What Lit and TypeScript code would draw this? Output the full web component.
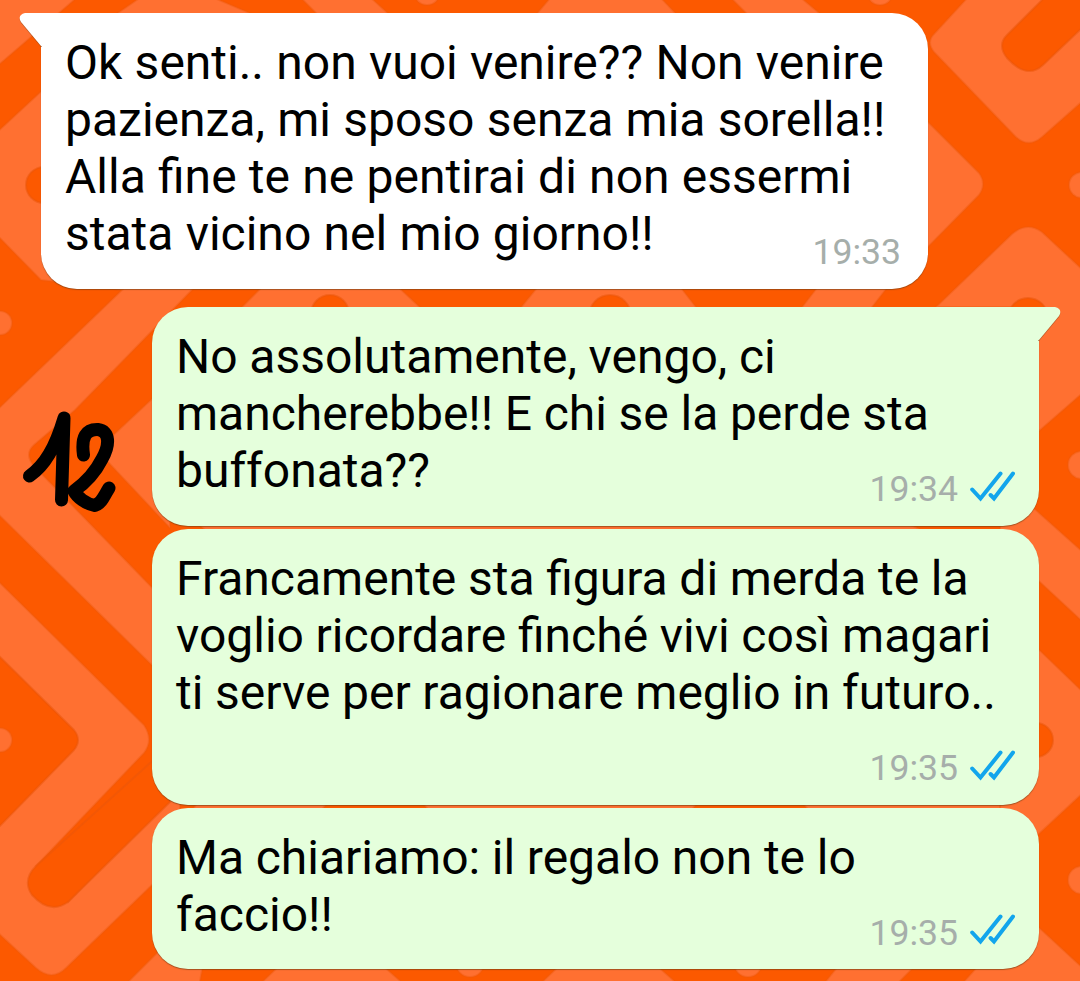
import { LitElement, html, css, svg, nothing } from 'lit';
import { customElement, property } from 'lit/decorators.js';
import { classMap } from 'lit/directives/class-map.js';

interface Message {
  lines: string[];
  time: string;
  sent: boolean;
  tail: boolean;
  tall?: boolean;
}

const MESSAGES: Message[] = [
  {
    lines: [
      'Ok senti.. non vuoi venire?? Non venire',
      'pazienza, mi sposo senza mia sorella!!',
      'Alla fine te ne pentirai di non essermi',
      'stata vicino nel mio giorno!!',
    ],
    time: '19:33',
    sent: false,
    tail: true,
  },
  {
    lines: ['No assolutamente, vengo, ci', 'mancherebbe!! E chi se la perde sta', 'buffonata??'],
    time: '19:34',
    sent: true,
    tail: true,
  },
  {
    lines: [
      'Francamente sta figura di merda te la',
      'voglio ricordare finché vivi così magari',
      'ti serve per ragionare meglio in futuro..',
    ],
    time: '19:35',
    sent: true,
    tail: false,
    tall: true,
  },
  {
    lines: ['Ma chiariamo: il regalo non te lo', 'faccio!!'],
    time: '19:35',
    sent: true,
    tail: false,
  },
];

// light ribbons of the wallpaper
const RIBBONS = [
  // left side
  'M-5 -5H80L-5 68Z',
  'M-5 134L141 -1H212L300 80V120L193 289L75 410L34 445Q24 454 34 466L170 606V683L-5 511V412L122 290L41 280L-5 233Z',
  'M170 382L108 440Q98 450 108 462L170 528Z',
  'M-5 578L144 725Q154 740 144 753L36 866L68 902L152 815L180 788V850L152 885L66 968Q52 982 36 968L-5 930Z',
  'M124 986L170 940H208L199 986Z',
  // strips between the bubbles
  'M265 284H395L424 311H238Z',
  'M540 284H678L699 311H518Z',
  'M820 284H890L869 311H799Z',
  'M300 -3H370L392 17H320Z',
  'M212 -3L259 17H112L141 -3Z',
  'M551 -3H660L679 17H534Z',
  'M730 -3H800L824 17H750Z',
  'M195 522H905L930 534H210Z',
  'M200 800H330L320 812H190Z',
  'M420 800H700L690 812H430Z',
  'M800 800H1010V812H810Z',
  'M280 965H382L406 986H258Z',
  'M560 965H656L680 986H538Z',
  'M839 965H916L895 986H822Z',
  'M979 965L1000 910H1020L1085 970V986H960Z',
  // right side
  'M970 -5L934 34Q926 42 934 52L1013 134Q1027 150 1042 137L1085 99V-5Z',
  'M920 114L979 173Q987 184 979 195L920 255Z',
  'M936 307L1012 234Q1027 221 1042 232L1085 272V391L1039 431H1020V307Z',
  'M1000 478L1085 554V624L1000 545Z',
  'M1000 612L1085 694V791L1000 870Z',
];

const GROOVES = [
  'M-5 652L74 730Q82 740 74 750L-5 831Z',
  'M170 745L36 866Q22 880 32 895Q50 915 68 902L170 802Z',
  'M1046 -4L1007 35Q997 45 1007 58Q1027 80 1043 65L1085 25V-4Z',
];

const LIGHT_DOTS = [
  [0, 323, 12],
  [0, 740, 12],
  [427, -8, 13],
  [880, -8, 13],
  [470, 963, 14],
  [748, 963, 14],
  [1082, 185, 13],
  [1082, 465, 14],
  [1082, 880, 14],
];

const DARK_DOTS = [
  [44, 185, 18],
  [330, 314, 19],
  [610, 316, 21],
  [1028, 318, 20],
  [1036, 740, 17],
];

@customElement('chat-wallpaper')
export class ChatWallpaper extends LitElement {
  static styles = css`
    :host {
      display: block;
    }

    svg {
      display: block;
      width: 100%;
      height: 100%;
    }

    .ribbon {
      fill: #ff7031;
      stroke: #ee5b0d;
      stroke-width: 2;
      stroke-opacity: 0.4;
    }

    .groove {
      fill: #fc5900;
      stroke: #e9560a;
      stroke-width: 2;
      stroke-opacity: 0.5;
    }
  `;

  render() {
    return html`
      <svg viewBox="0 0 1080 981" preserveAspectRatio="none" aria-hidden="true">
        ${RIBBONS.map((d) => svg`<path class="ribbon" d=${d} />`)}
        ${GROOVES.map((d) => svg`<path class="groove" d=${d} />`)}
        ${LIGHT_DOTS.map(([x, y, r]) => svg`<circle class="ribbon" cx=${x} cy=${y} r=${r} />`)}
        ${DARK_DOTS.map(([x, y, r]) => svg`<circle class="groove" cx=${x} cy=${y} r=${r} />`)}
      </svg>
    `;
  }
}

@customElement('chat-bubble')
export class ChatBubble extends LitElement {
  static styles = css`
    :host {
      display: block;
    }

    .bubble {
      position: relative;
      display: grid;
      box-sizing: border-box;
      width: 887px;
      padding: 21px 24px 27px;
      border-radius: 36px;
      background: #fff;
      word-spacing: 0.35px;
      box-shadow: 0 1px 1px rgba(110, 60, 20, 0.6);
    }

    .sent {
      margin-left: auto;
      background: #e5ffdc;
      word-spacing: -0.25px;
    }

    .received.tail {
      border-top-left-radius: 0;
    }

    .sent.tail {
      border-top-right-radius: 0;
    }

    .tall {
      padding-bottom: 84.25px;
    }

    :host(:last-of-type) .bubble {
      padding-bottom: 26.25px;
    }

    .text,
    .meta {
      grid-area: 1 / 1;
    }

    .text {
      margin: 0;
      font-size: 48px;
      line-height: 57px;
      white-space: nowrap;
      color: #000;
    }

    .line {
      display: block;
    }

    .meta {
      display: flex;
      align-items: center;
      align-self: end;
      justify-self: end;
      gap: 11px;
      margin-bottom: -11px;
      margin-right: 3px;
      font-size: 35.6px;
      line-height: 42px;
      color: #a6aeaa;
    }

    .tall .meta {
      margin-bottom: -68.25px;
    }

    .sent .meta {
      margin-right: 0;
    }

    .ticks {
      display: block;
      width: 46px;
      height: 32px;
      margin-top: -5px;
      fill: none;
      stroke: #12a5ec;
      stroke-width: 4;
      stroke-linecap: round;
    }

    .corner {
      position: absolute;
      top: 0;
      left: -21px;
      width: 22px;
      height: 34px;
      fill: #fff;
      overflow: visible;
      filter: drop-shadow(0 1px 0.5px rgba(110, 60, 20, 0.5));
      clip-path: inset(0 0 -3px -3px);
    }

    .sent .corner {
      left: auto;
      right: -21px;
      fill: #e5ffdc;
      transform: scaleX(-1);
    }
  `;

  @property({ attribute: false }) message!: Message;

  renderTicks() {
    return html`
      <svg class="ticks" viewBox="0 0 46 32" role="img" aria-label="Letto">
        <path d="M3.2 18.5L11.5 27.5L31.5 2.5" />
        <path d="M21.6 24L25 27.5L44 2.5" />
      </svg>
    `;
  }

  render() {
    const { lines, time, sent, tail, tall } = this.message;
    const classes = { bubble: true, sent, received: !sent, tail, tall: !!tall };

    return html`
      <div class=${classMap(classes)}>
        ${tail
          ? html`<svg class="corner" viewBox="0 0 22 34">
              <path d="M22 0H5Q-3 2 1 9L21 33H22Z" />
            </svg>`
          : nothing}
        <p class="text">${lines.map((line) => html`<span class="line">${line}</span>`)}</p>
        <div class="meta">
          <span>${time}</span>
          ${sent ? this.renderTicks() : nothing}
        </div>
      </div>
    `;
  }
}

@customElement('app-root')
export class AppRoot extends LitElement {
  static styles = css`
    :host {
      position: relative;
      display: block;
      box-sizing: border-box;
      width: 1080px;
      height: 981px;
      overflow: hidden;
      background: #fc5900;
      font-family: Roboto, 'Liberation Sans', sans-serif;
    }

    chat-wallpaper {
      position: absolute;
      inset: 0;
    }

    .thread {
      position: relative;
      display: flex;
      flex-direction: column;
      gap: 2.75px;
      padding: 13px 41px 0;
    }

    .first {
      margin-bottom: 15.25px;
    }

    .scribble {
      position: absolute;
      left: 20px;
      top: 408px;
      width: 100px;
      height: 108px;
      fill: none;
      stroke: #000;
      stroke-width: 13;
      stroke-linecap: round;
      stroke-linejoin: round;
    }
  `;

  render() {
    return html`
      <chat-wallpaper></chat-wallpaper>
      <div class="thread">
        ${MESSAGES.map(
          (message, i) =>
            html`<chat-bubble class=${classMap({ first: i === 0 })} .message=${message}></chat-bubble>`
        )}
      </div>
      <svg class="scribble" viewBox="0 0 100 108" role="img" aria-label="12">
        <path d="M9.5 68C25 57 35 40 44 10L41.5 92" />
        <path d="M63.5 47C61 29 66 21 78 21.5C90 23 90 37 82 51C76 63 68 73 54 83C57 89 66 96 75 97.5C82 95 84 88 89 80" />
      </svg>
    `;
  }
}
